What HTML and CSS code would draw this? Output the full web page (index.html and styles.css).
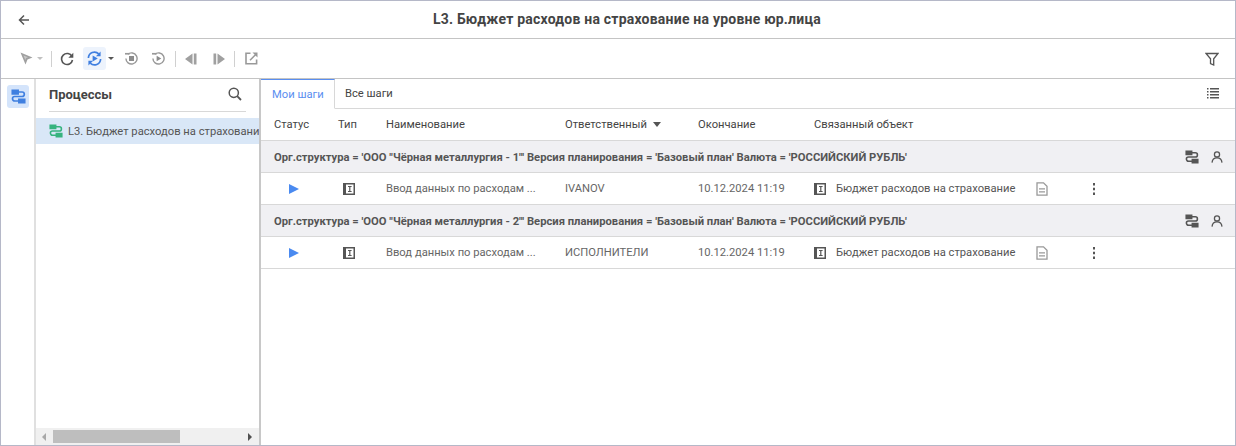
FILE: index.html
```html
<!DOCTYPE html>
<html lang="ru">
<head>
<meta charset="utf-8">
<title>L3. Бюджет расходов</title>
<link rel="stylesheet" href="styles.css">
</head>
<body>
<svg class="defs" width="0" height="0" aria-hidden="true">
  <defs>
    <symbol id="proc" viewBox="0 0 16 16">
      <path d="M.5 .5h8v5.500h-8zM7.500 10h8v5.500h-8z" fill="currentColor"/>
      <path d="M8 3.200h3.800a2.400 2.400 0 0 1 0 4.800H4a2.400 2.400 0 0 0 0 4.800H8" fill="none" stroke="currentColor" stroke-width="1.800"/>
    </symbol>
    <symbol id="user" viewBox="0 0 14 14">
      <circle cx="7" cy="4" r="3" fill="none" stroke="currentColor" stroke-width="1.500"/>
      <path d="M1.200 13.500c.3-3.300 2.600-5.500 5.800-5.500s5.500 2.200 5.800 5.500" fill="none" stroke="currentColor" stroke-width="1.500"/>
    </symbol>
    <symbol id="type" viewBox="0 0 12 12">
      <path d="M0 0h12v12H0zM3 1.500v9h7.500v-9z" fill="currentColor" fill-rule="evenodd"/>
      <path d="M5 3h3.600v1H7.400v4h1.200v1H5V8h1.200V4H5z" fill="currentColor"/>
    </symbol>
    <symbol id="doc" viewBox="0 0 12 14">
      <path d="M1 .8h6.500L11 4.300v8.900H1zM3 6.800h6M3 9.800h6" fill="none" stroke="currentColor" stroke-width="1.300"/>
    </symbol>
    <symbol id="dots" viewBox="0 0 4 14">
      <path d="M1 1h2v2.400H1zM1 5.800h2v2.400H1zM1 10.600h2V13H1z" fill="currentColor"/>
    </symbol>
  </defs>
</svg>
<div class="app">
  <header class="titlebar">
    <button class="back" aria-label="Назад">
      <svg width="12" height="12" viewBox="0 0 12 12"><path d="M11 6H2M6 1.500 1.500 6 6 10.500" fill="none" stroke="#555" stroke-width="1.500"/></svg>
    </button>
    <h1 class="title">L3. Бюджет расходов на страхование на уровне юр.лица</h1>
  </header>
  <div class="toolbar">
    <span class="tool t-arrow">
      <svg width="13" height="13" viewBox="0 0 13 13"><path d="M.5.500 12.500 5.500 7.500 7.500 5.500 12.500z" fill="#a0a0a0"/><path d="M3.500 3.500 8 5.300 6 6 5.300 8z" fill="#c8c8c8"/></svg>
    </span>
    <span class="caret light"></span>
    <span class="sep s1"></span>
    <span class="tool t-refresh">
      <svg width="14" height="14" viewBox="0 0 14 14"><path d="M12 4.500A5.500 5.500 0 1 0 12.500 8" fill="none" stroke="#555" stroke-width="1.600"/><path d="M13.300 .8v5H8.300z" fill="#555"/></svg>
    </span>
    <span class="tool active t-run">
      <svg width="15" height="15" viewBox="0 0 16 16"><path d="M1.500 7.500a6.500 6.500 0 0 1 11-4.500M14.500 8.500a6.500 6.500 0 0 1-11 4.500" fill="none" stroke="#3f7fe0" stroke-width="1.800"/><path d="M14.500 .5v5h-5zM1.500 15.500v-5h5z" fill="#3f7fe0"/><path d="M6 4.800l5.500 3.200L6 11.200z" fill="#3f7fe0"/></svg>
    </span>
    <span class="caret"></span>
    <span class="tool t-stop">
      <svg width="13" height="13" viewBox="0 0 14 14"><path d="M3 2.500A6 6 0 1 1 1 7" fill="none" stroke="#999" stroke-width="1.500"/><path d="M0 1h5v1.800H0z" fill="#999"/><path d="M4.300 4.300h5.400v5.400H4.300z" fill="#8c8c8c"/></svg>
    </span>
    <span class="tool t-replay">
      <svg width="13" height="13" viewBox="0 0 14 14"><path d="M3 2.500A6 6 0 1 1 1 7" fill="none" stroke="#999" stroke-width="1.500"/><path d="M0 1h5v1.800H0z" fill="#999"/><path d="M5 4l5 3-5 3z" fill="#8c8c8c"/></svg>
    </span>
    <span class="sep s2"></span>
    <span class="tool t-prev">
      <svg width="12" height="12" viewBox="0 0 12 12"><path d="M7.500 .5v11L0 6zM8.800 .5H11.500v11H8.800z" fill="#a0a0a0"/></svg>
    </span>
    <span class="tool t-next">
      <svg width="12" height="12" viewBox="0 0 12 12"><path d="M4.500 .5v11L12 6zM.5 .5H3.200v11H.5z" fill="#a0a0a0"/></svg>
    </span>
    <span class="sep s3"></span>
    <span class="tool t-open">
      <svg width="13" height="13" viewBox="0 0 13 13"><path d="M5.500 1.200H1v10.600h10.600V7.500" fill="none" stroke="#999" stroke-width="1.600"/><path d="M5 8.200 11 2.200" stroke="#999" stroke-width="1.600"/><path d="M7.500 .5H12.500V5.500z" fill="#999"/></svg>
    </span>
    <span class="tool t-filter">
      <svg width="14" height="14" viewBox="0 0 14 14"><path d="M1 1.500h12L8.700 6.800V13L5.500 11.500V6.800z" fill="none" stroke="#555" stroke-width="1.300"/></svg>
    </span>
  </div>
  <main class="body">
    <nav class="rail">
      <span class="rail-btn"><svg class="ic16 blue"><use href="#proc"/></svg></span>
    </nav>
    <aside class="side">
      <div class="side-head">
        <span class="side-title">Процессы</span>
        <svg width="14" height="14" viewBox="0 0 14 14"><circle cx="5.800" cy="5.800" r="4.600" fill="none" stroke="#555" stroke-width="1.500"/><path d="M9.200 9.200 13 13" stroke="#555" stroke-width="1.800"/></svg>
      </div>
      <div class="side-list">
        <div class="side-item">
          <svg class="ic14 green"><use href="#proc"/></svg>
          <span class="side-text">L3. Бюджет расходов на страхование на уровне юр.лица</span>
        </div>
      </div>
      <div class="hscroll">
        <span class="arr left"></span>
        <span class="thumb"></span>
        <span class="arr right"></span>
      </div>
    </aside>
    <section class="content">
      <div class="tabs">
        <span class="tab on">Мои шаги</span>
        <span class="tab">Все шаги</span>
        <svg class="listicon" width="12" height="12" viewBox="0 0 12 12"><path d="M0 1h1.500v1.400H0zM3 1h9v1.400H3zM0 4h1.500v1.400H0zM3 4h9v1.400H3zM0 7h1.500v1.400H0zM3 7h9v1.400H3zM0 10h1.500v1.400H0zM3 10h9v1.400H3z" fill="#555"/></svg>
      </div>
      <div class="grid head">
        <span>Статус</span><span>Тип</span><span>Наименование</span>
        <span class="sorted">Ответственный<i class="sortcaret"></i></span>
        <span>Окончание</span><span>Связанный объект</span>
      </div>
      <div class="group">
        <span class="group-text">Орг.структура = 'ООО "Чёрная металлургия - 1"' Версия планирования = 'Базовый план' Валюта = 'РОССИЙСКИЙ РУБЛЬ'</span>
        <svg class="ic14 gi1"><use href="#proc"/></svg>
        <svg class="ic12 gi2"><use href="#user"/></svg>
      </div>
      <div class="grid row">
        <span class="play"></span>
        <span class="typecell"><svg class="ic12"><use href="#type"/></svg></span>
        <span>Ввод данных по расходам ...</span>
        <span>IVANOV</span>
        <span>10.12.2024 11:19</span>
        <span class="obj"><svg class="ic12"><use href="#type"/></svg>Бюджет расходов на страхование</span>
        <svg class="docic"><use href="#doc"/></svg>
        <svg class="dotsic"><use href="#dots"/></svg>
      </div>
      <div class="group">
        <span class="group-text">Орг.структура = 'ООО "Чёрная металлургия - 2"' Версия планирования = 'Базовый план' Валюта = 'РОССИЙСКИЙ РУБЛЬ'</span>
        <svg class="ic14 gi1"><use href="#proc"/></svg>
        <svg class="ic12 gi2"><use href="#user"/></svg>
      </div>
      <div class="grid row">
        <span class="play"></span>
        <span class="typecell"><svg class="ic12"><use href="#type"/></svg></span>
        <span>Ввод данных по расходам ...</span>
        <span>ИСПОЛНИТЕЛИ</span>
        <span>10.12.2024 11:19</span>
        <span class="obj"><svg class="ic12"><use href="#type"/></svg>Бюджет расходов на страхование</span>
        <svg class="docic"><use href="#doc"/></svg>
        <svg class="dotsic"><use href="#dots"/></svg>
      </div>
    </section>
  </main>
</div>
</body>
</html>
```
FILE: styles.css
```css
* { box-sizing: border-box; }
html, body { margin: 0; height: 100%; }
body { font-family: Roboto, "Liberation Sans", sans-serif; font-size: 11px; color: #555; background: #fff; overflow: hidden; }
.defs { position: absolute; }
.blue { color: #3f7fe0; }
.green { color: #36b37e; }
.app { width: 1236px; height: 446px; border: 1px solid #b5b8c8; display: flex; flex-direction: column; }
.titlebar { height: 38px; flex: none; border-bottom: 1px solid #c4c4c4; display: flex; align-items: center; position: relative; padding-left: 17px; }
.back { border: 0; padding: 0; background: none; display: flex; }
.title { position: absolute; left: 432px; top: 11px; margin: 0; font-size: 14px; letter-spacing: 0.22px; line-height: 15px; font-weight: 700; color: #444; white-space: nowrap; }
.toolbar { height: 40px; flex: none; border-bottom: 1px solid #c4c4c4; display: flex; align-items: center; padding-left: 18px; padding-right: 16px; }
.tool { display: flex; align-items: center; justify-content: center; flex: none; }
.t-arrow { width: 14px; }
.caret { width: 0; height: 0; border-left: 3px solid transparent; border-right: 3px solid transparent; border-top: 3px solid #555; flex: none; margin-left: 2px; }
.caret.light { border-top-color: #c0c0c0; margin-left: 4px; }
.sep { width: 1px; height: 16px; background: #d0d0d0; flex: none; }
.s1 { margin-left: 8px; }
.t-refresh { width: 14px; margin-left: 8px; }
.active { width: 23px; height: 23px; border-radius: 3px; background: #edf3fc; margin-left: 9px; }
.t-stop { width: 14px; margin-left: 10px; }
.t-replay { width: 14px; margin-left: 13px; }
.s2 { margin-left: 10px; }
.t-prev { width: 12px; margin-left: 9px; }
.t-next { width: 12px; margin-left: 16px; }
.s3 { margin-left: 9px; }
.t-open { width: 13px; margin-left: 10px; }
.t-filter { margin-left: auto; }
.body { flex: 1; display: flex; min-height: 0; }
.rail { width: 35px; flex: none; border-right: 2px solid #e0e0e0; padding: 6px 0 0 6px; }
.rail-btn { width: 22px; height: 23px; border-radius: 3px; background: #d4e4fb; display: flex; align-items: center; justify-content: center; }
.ic16 { width: 15px; height: 15px; }
.ic14 { width: 14px; height: 14px; flex: none; }
.ic12 { width: 12px; height: 12px; flex: none; }
.side { width: 223px; flex: none; display: flex; flex-direction: column; min-width: 0; }
.side-head { height: 33px; margin: 0 13px; padding: 0 4px 2px 0; border-bottom: 1px solid #d8d8d8; display: flex; align-items: center; justify-content: space-between; }
.side-title { font-size: 13px; font-weight: 700; color: #444; }
.side-list { flex: 1; padding-top: 6px; overflow: hidden; }
.side-item { height: 26px; background: #d9e7f7; display: flex; align-items: center; padding-left: 13px; gap: 5px; overflow: hidden; }
.side-text { white-space: nowrap; font-size: 11.2px; }
.hscroll { height: 17px; background: #f0f0f0; display: flex; align-items: center; padding: 0 7px 0 6px; }
.thumb { width: 127px; height: 13px; background: #bebebe; margin-left: 7px; }
.arr { width: 0; height: 0; border-top: 4px solid transparent; border-bottom: 4px solid transparent; flex: none; }
.arr.left { border-right: 4px solid #a8a8a8; }
.arr.right { border-left: 4px solid #505050; margin-left: auto; }
.content { flex: 1; min-width: 0; border-left: 2px solid #c8c8c8; font-size: 11.2px; }
.tabs { height: 30px; border-bottom: 1px solid #d8d8d8; display: flex; position: relative; align-items: stretch; }
.tab { display: flex; align-items: center; padding: 0 10px; color: #444; }
.tab.on { color: #5a8ef0; border-top: 1px solid #5a8ef0; border-right: 1px solid #d8d8d8; border-bottom: 1px solid #fff; height: 30px; width: 74px; padding: 0 0 0 11px; }
.listicon { position: absolute; right: 16px; top: 8px; }
.grid { display: grid; grid-template-columns: 64px 48px 179px 133px 116px 222px 56px 14px; padding-left: 13px; align-items: center; white-space: nowrap; }
.head { height: 32px; color: #444; border-bottom: 1px solid #d8d8d8; }
.sorted { display: flex; align-items: center; }
.sortcaret { width: 0; height: 0; border-left: 4px solid transparent; border-right: 4px solid transparent; border-top: 5px solid #555; margin-left: 6px; }
.group { height: 32px; background: #f0f0f3; border-bottom: 1px solid #d8d8d8; display: flex; align-items: center; padding: 1px 12px 0 13px; font-size: 11.22px; font-weight: 700; color: #555; }
.group-text { flex: 1; white-space: nowrap; }
.gi1 { color: #555; }
.gi2 { color: #555; margin-left: 12px; }
.row { height: 32px; border-bottom: 1px solid #d8d8d8; color: #666; }
.play { width: 0; height: 0; border-left: 10px solid #4a8af0; border-top: 5px solid transparent; border-bottom: 5px solid transparent; margin-left: 15px; }
.typecell { display: flex; padding-left: 5px; }
.typecell, .obj { color: #555; }
.obj { display: flex; align-items: center; gap: 10px; }
.docic { width: 12px; height: 14px; color: #999; }
.dotsic { width: 4px; height: 14px; color: #555; }
```
